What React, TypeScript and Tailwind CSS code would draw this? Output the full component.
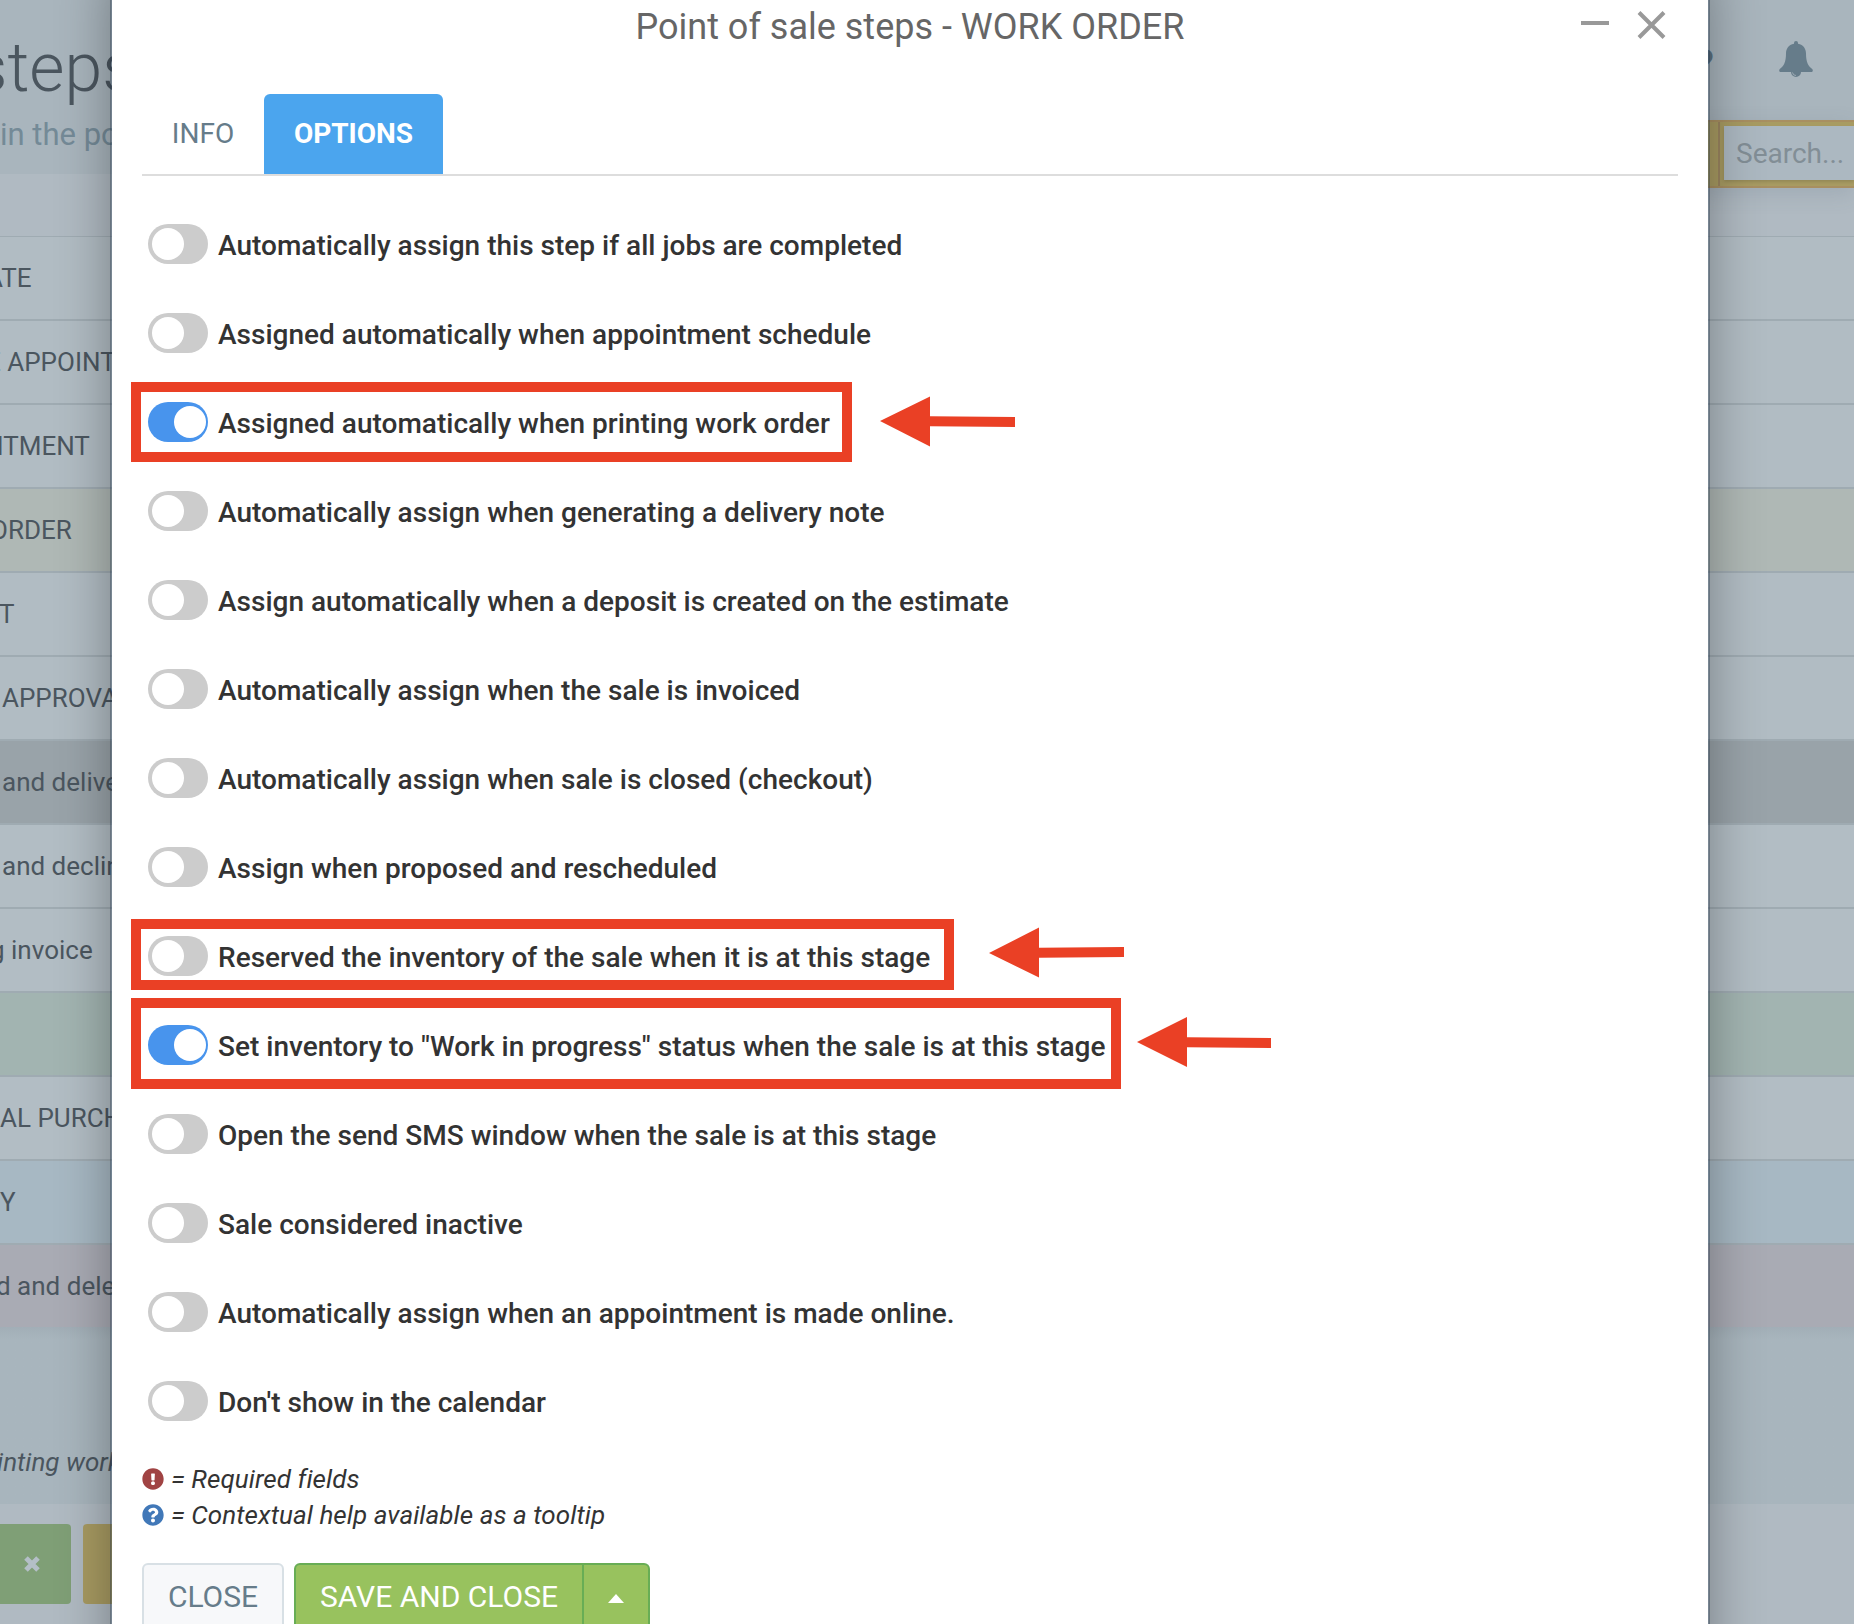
import { FaExclamationCircle, FaQuestionCircle } from "react-icons/fa";

const options = [
  { label: "Automatically assign this step if all jobs are completed", on: false },
  { label: "Assigned automatically when appointment schedule", on: false },
  { label: "Assigned automatically when printing work order", on: true },
  { label: "Automatically assign when generating a delivery note", on: false },
  { label: "Assign automatically when a deposit is created on the estimate", on: false },
  { label: "Automatically assign when the sale is invoiced", on: false },
  { label: "Automatically assign when sale is closed (checkout)", on: false },
  { label: "Assign when proposed and rescheduled", on: false },
  { label: "Reserved the inventory of the sale when it is at this stage", on: false },
  { label: 'Set inventory to "Work in progress" status when the sale is at this stage', on: true },
  { label: "Open the send SMS window when the sale is at this stage", on: false },
  { label: "Sale considered inactive", on: false },
  { label: "Automatically assign when an appointment is made online.", on: false },
  { label: "Don't show in the calendar", on: false },
];

// offset pulls the text under the left edge of the window
const rows = [
  { label: "ATE", bg: "bg-[#b1bcc3]", offset: "-ml-[14px]" },
  { label: "E APPOINT", bg: "bg-[#b1bcc3]", offset: "-ml-[14px]" },
  { label: "NTMENT", bg: "bg-[#b1bcc3]", offset: "-ml-[15px]" },
  { label: "ORDER", bg: "bg-[#afb8b5]", offset: "-ml-[10px]" },
  { label: "T", bg: "bg-[#b1bcc3]", offset: "-ml-[1px]" },
  { label: "APPROVA", bg: "bg-[#b1bcc3]", offset: "ml-[2px]" },
  { label: "and delive", bg: "bg-[#99a3a9]", offset: "ml-[2px]" },
  { label: "and declin", bg: "bg-[#b2bdc4]", offset: "ml-[2px]" },
  { label: "g invoice", bg: "bg-[#b2bdc4]", offset: "-ml-[10px]" },
  { label: "", bg: "bg-[#a2b4b1]", offset: "" },
  { label: "AL PURCH", bg: "bg-[#b2bdc4]", offset: "ml-0" },
  { label: "Y", bg: "bg-[#a7b8c3]", offset: "ml-0" },
  { label: "d and dele", bg: "bg-[#a9abb4]", offset: "-ml-[4px]" },
];

function Toggle({ on }: { on: boolean }) {
  return (
    <span className={`flex h-10 w-15 shrink-0 items-center rounded-full ${on ? "bg-[#4894ed] pl-[26px]" : "bg-[#ccc] pl-1"}`}>
      <span className="size-8 rounded-full bg-white" />
    </span>
  );
}

function BellIcon({ className }: { className?: string }) {
  return (
    <svg width="34" height="36" viewBox="0 0 34 36" className={className}>
      <path
        fill="currentColor"
        d="M17 0a2 2 0 0 1 2 2v.8C24.500 3.800 27 8 27 12.500C27 21 29 25 33.200 28C34.500 29.500 33.500 31 32 31H22a5 5 0 0 1-10 0H2C.5 31-.5 29.500.8 28C5 25 7 21 7 12.500C7 8 9.500 3.800 15 2.800V2a2 2 0 0 1 2-2z"
      />
      <path d="M13.500 31.500a3.500 3.500 0 0 0 3.500 3" fill="none" stroke="#a9b5bd" strokeWidth="0.8" />
    </svg>
  );
}

function Background() {
  return (
    <div className="flex h-[1624px] flex-col bg-[#b0bac2] text-[#4b565f]">
      <header className="flex h-[174px] shrink-0 justify-between bg-[#a9b5bd]">
        <div className="pt-7">
          <h1 className="-ml-[27px] text-[68px] leading-[80px] font-light">steps</h1>
          <p className="pt-[5px] text-[31px] leading-[44px] text-[#748a97]">in the po</p>
        </div>
        <div className="flex w-[160px] flex-col">
          <div className="flex h-[120px] shrink-0 items-start pt-[41px]">
            <span className="w-[19px] text-right text-[40px] leading-[48px] font-bold text-[#5b7180]">?</span>
            <BellIcon className="ml-[66px] text-[#667c8a]" />
          </div>
          <div className="flex h-[68px] shrink-0 border-y-2 border-[#a88f61] bg-[#a89b62] shadow-[0_6px_20px_rgba(70,90,110,0.15)]">
            <div className="w-[26px] shrink-0 border-r-2 border-[#9a845f]" />
            <div className="mt-1 mb-[6px] ml-1 flex flex-1 items-center bg-[#acb8c1] pt-px pl-3 text-[28px] text-[#828e96] shadow-[0_2px_3px_rgba(0,0,0,0.12)]">
              Search...
            </div>
          </div>
        </div>
      </header>

      <div className="h-[62px] shrink-0" />
      {rows.map((row, i) => (
        <div
          key={i}
          className={`flex shrink-0 items-center border-[#9fabb2] text-[26px] whitespace-nowrap ${row.bg} ${i === 0 ? "h-[83px] border-t" : "h-[84px] border-t-2"}`}
        >
          <span className={row.offset}>{row.label}</span>
        </div>
      ))}

      <div className="h-[177px] shrink-0 bg-[#a8b5bd] bg-linear-to-b from-[#a2aeb7] to-[#a8b5bd] to-[12px] pt-[117px]">
        <p className="-ml-[3px] text-[26px] leading-9 italic">inting work</p>
      </div>
      <div className="flex gap-3 pt-5">
        <div className="flex h-20 w-[71px] items-center rounded-r bg-[#7f9f76] pl-6">
          <svg width="16" height="16" stroke="#b4bfc7" strokeWidth="5">
            <path d="M2 2 L14 14 M14 2 L2 14" />
          </svg>
        </div>
        <div className="h-20 w-[100px] rounded bg-[#a89b62]" />
      </div>
    </div>
  );
}

function Annotations() {
  return (
    <svg className="pointer-events-none absolute top-0 left-0" width="1854" height="1624" fill="none">
      <g stroke="#ea4025" strokeWidth="10">
        <rect x="136" y="387" width="711" height="70" />
        <rect x="136" y="924" width="813" height="61" />
        <rect x="136" y="1003" width="980" height="81" />
      </g>
      <g fill="#ea4025">
        <path d="M880 421 L930 396.5 V416.3 L1015 417 V427 L930 426.3 V446.5 Z" />
        <path d="M989 953 L1039 927.5 V947.7 L1124 947 V957 L1039 957.7 V977.5 Z" />
        <path d="M1137 1042 L1187 1017 V1037.3 L1271 1038 V1048 L1187 1047.3 V1067 Z" />
      </g>
    </svg>
  );
}

export default function App() {
  return (
    <div className="relative h-[1624px] w-[1854px] overflow-hidden font-['Roboto',sans-serif]">
      <Background />

      {/* Window */}
      <div className="absolute -top-10 left-[110px] h-[1720px] w-[1600px] border-2 border-[#26384a]/40 bg-white bg-clip-padding px-[30px] pt-[38px] text-[#333] shadow-[0_10px_50px_rgba(0,0,0,0.33)]">
        <div className="flex h-[94px] items-start justify-between">
          <span className="w-[97px]" />
          <h2 className="pt-[6px] text-[36px] leading-[42px] text-[#666]">Point of sale steps - WORK ORDER</h2>
          <svg width="97" height="50" stroke="#999" strokeWidth="4" className="shrink-0">
            <path d="M0 23 H28 M58 12.500 L83 37.500 M83 12.500 L58 37.500" />
          </svg>
        </div>

        <div className="flex h-[82px] border-b-2 border-[#ddd] text-[28px]">
          <div className="flex w-[122px] items-center justify-center text-[#667c8a]">INFO</div>
          <div className="flex w-[179px] items-center justify-center rounded-t-md bg-[#4ba5ee] font-bold text-white">OPTIONS</div>
        </div>

        <div className="flex flex-col gap-[49px] pt-12 pl-[6px]">
          {options.map((option) => (
            <label key={option.label} className="flex h-10 items-center gap-[10px] text-[28px] font-medium tracking-[0.01px] whitespace-nowrap">
              <Toggle on={option.on} />
              <span className="pt-[3px]">{option.label}</span>
            </label>
          ))}
        </div>

        <div className="pt-[40px] text-[26px] leading-9 tracking-[0.07px] italic">
          <div className="flex items-center gap-[7px]">
            <FaExclamationCircle className="size-[22px] text-[#a04343]" />= Required fields
          </div>
          <div className="flex items-center gap-[7px]">
            <FaQuestionCircle className="size-[22px] text-[#4178b8]" />= Contextual help available as a tooltip
          </div>
        </div>

        <div className="flex pt-[30px] text-[30px]">
          <button className="h-[67px] w-[142px] rounded-md border-2 border-[#d8e0e5] bg-[#f7f8fa] text-[#667c8a]">CLOSE</button>
          <button className="ml-[10px] h-[67px] w-[290px] rounded-l-md border-2 border-[#68ad55] bg-[#98c25e] text-white">SAVE AND CLOSE</button>
          <button className="flex h-[67px] w-[66px] items-center justify-center rounded-r-md border-2 border-l-0 border-[#68ad55] bg-[#98c25e] pt-1">
            <svg width="16" height="9" fill="white">
              <path d="M8 0 L16 9 H0 Z" />
            </svg>
          </button>
        </div>
      </div>

      <Annotations />
    </div>
  );
}
